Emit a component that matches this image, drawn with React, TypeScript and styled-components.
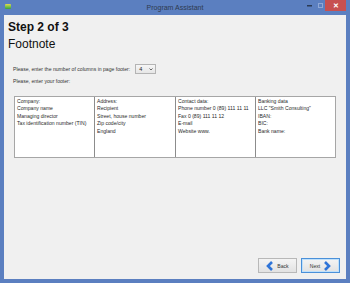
import React from 'react';
import styled, { createGlobalStyle } from 'styled-components';

const GlobalStyle = createGlobalStyle`
  html, body {
    margin: 0;
    padding: 0;
    background: #5b7fc0;
  }
  body {
    font-family: "Liberation Sans", Arial, sans-serif;
  }
`;

const Window = styled.div`
  width: 350px;
  height: 283px;
  display: flex;
  flex-direction: column;
  background: #5b7fc0;
  box-sizing: border-box;
`;

const TitleBar = styled.div`
  position: relative;
  height: 15px;
  display: flex;
  align-items: center;
  justify-content: center;
  flex-shrink: 0;
`;

const AppIcon = styled.div`
  position: absolute;
  left: 5px;
  top: 4px;
  width: 6px;
  height: 5px;
  border-radius: 1px;
  background: linear-gradient(180deg, #e6d84a 0%, #6dc04a 60%, #3f9a3a 100%);
`;

const Title = styled.span`
  font-size: 7px;
  line-height: 15px;
  color: #2e3a4e;
  margin-top: -1px;
`;

const Controls = styled.div`
  position: absolute;
  right: 4px;
  top: 0;
  display: flex;
  align-items: flex-start;
`;

const CtrlButton = styled.div<{ $w: number }>`
  width: ${({ $w }) => $w}px;
  height: 11px;
  display: flex;
  align-items: center;
  justify-content: center;
`;

const CloseButton = styled(CtrlButton)`
  background: #c75050;
  color: #fff;
  font-size: 7px;
  font-weight: bold;
`;

const Body = styled.div`
  flex: 1;
  margin: 0 4px 4px 4px;
  background: #f0f0f0;
  display: flex;
  flex-direction: column;
  padding: 5px 6px 6px 4px;
  box-sizing: border-box;
  color: #1a1a1a;
`;

const StepTitle = styled.div`
  font-size: 12px;
  line-height: 14px;
  font-weight: bold;
  color: #111;
`;

const PageTitle = styled.div`
  margin-top: 3px;
  font-size: 12px;
  line-height: 14px;
  color: #111;
`;

const Row = styled.div`
  display: flex;
  align-items: center;
  gap: 4px;
  margin-left: 5px;
  font-size: 5.1px;
  color: #333;
`;

const ColumnsRow = styled(Row)`
  margin-top: 13px;
  height: 10px;
`;

const FooterRow = styled(Row)`
  margin-top: 3px;
  height: 8px;
`;

const Select = styled.div`
  width: 14px;
  height: 8px;
  border: 1px solid #b4b4b4;
  background: linear-gradient(180deg, #f6f6f6, #e6e6e6);
  display: flex;
  align-items: center;
  justify-content: space-between;
  padding: 0 2px 0 3px;
  box-sizing: content-box;
  margin-left: 1px;
  font-size: 5.5px;
  color: #222;
`;

const Table = styled.div`
  margin: 11px 0 0 6px;
  width: 322px;
  height: 62px;
  box-sizing: border-box;
  border: 1px solid #a6a6a6;
  background: #fff;
  display: grid;
  grid-template-columns: 80px 81px 80px 1fr;
`;

const Cell = styled.div<{ $last?: boolean }>`
  border-right: ${({ $last }) => ($last ? 'none' : '1px solid #8c8c8c')};
  padding: 1px 2px;
  font-size: 5.1px;
  line-height: 7.4px;
  color: #2a2a2a;
  white-space: nowrap;
  overflow: hidden;
`;

const Footer = styled.div`
  margin-top: auto;
  display: flex;
  justify-content: flex-end;
  gap: 4px;
`;

const NavButton = styled.div<{ $focused?: boolean }>`
  width: 39px;
  height: 15px;
  box-sizing: border-box;
  border: 1px solid ${({ $focused }) => ($focused ? '#4a90d9' : '#b8b8b8')};
  box-shadow: ${({ $focused }) => ($focused ? 'inset 0 0 0 1px #bfe0fb' : 'none')};
  background: linear-gradient(180deg, #f4f4f4, #e2e2e2);
  display: flex;
  align-items: center;
  justify-content: center;
  gap: 3px;
  font-size: 5.1px;
  color: #333;
`;

const columns = [
  ['Company:', 'Company name', 'Managing director', 'Tax identification number (TIN)'],
  ['Address:', 'Recipient', 'Street, house number', 'Zip code/city', 'England'],
  ['Contact data:', 'Phone number 0 (89) 111 11 11', 'Fax 0 (89) 111 11 12', 'E-mail', 'Website www.'],
  ['Banking data', 'LLC "Smith Consulting"', 'IBAN:', 'BIC:', 'Bank name:'],
];

function Arrow({ dir }: { dir: 'left' | 'right' }) {
  const pts = dir === 'left' ? '6,1 2,5 6,9' : '2,1 6,5 2,9';
  return (
    <svg width="8" height="10" viewBox="0 0 8 10">
      <polyline points={pts} fill="none" stroke="#2f74d8" strokeWidth="2.6" strokeLinejoin="miter" />
    </svg>
  );
}

export default function App() {
  return (
    <Window>
      <GlobalStyle />
      <TitleBar>
        <AppIcon />
        <Title>Program Assistant</Title>
        <Controls>
          <CtrlButton $w={12}>
            <svg width="5" height="3" viewBox="0 0 5 3">
              <rect x="0" y="1" width="5" height="1.5" fill="#2a3a55" />
            </svg>
          </CtrlButton>
          <CtrlButton $w={10}>
            <svg width="5" height="5" viewBox="0 0 5 5">
              <rect x="0.5" y="0.5" width="4" height="4" fill="none" stroke="#8fa8d6" strokeWidth="1" />
            </svg>
          </CtrlButton>
          <CloseButton $w={21}>✕</CloseButton>
        </Controls>
      </TitleBar>
      <Body>
        <StepTitle>Step 2 of 3</StepTitle>
        <PageTitle>Footnote</PageTitle>
        <ColumnsRow>
          <span>Please, enter the number of columns in page footer:</span>
          <Select>
            <span>4</span>
            <svg width="4" height="3" viewBox="0 0 4 3">
              <polyline points="0.5,0.5 2,2 3.5,0.5" fill="none" stroke="#444" strokeWidth="0.8" />
            </svg>
          </Select>
        </ColumnsRow>
        <FooterRow>
          <span>Please, enter your footer:</span>
        </FooterRow>
        <Table>
          {columns.map((col, i) => (
            <Cell key={i} $last={i === columns.length - 1}>
              {col.map((line, j) => (
                <div key={j}>{line}</div>
              ))}
            </Cell>
          ))}
        </Table>
        <Footer>
          <NavButton>
            <Arrow dir="left" />
            <span>Back</span>
          </NavButton>
          <NavButton $focused>
            <span>Next</span>
            <Arrow dir="right" />
          </NavButton>
        </Footer>
      </Body>
    </Window>
  );
}
